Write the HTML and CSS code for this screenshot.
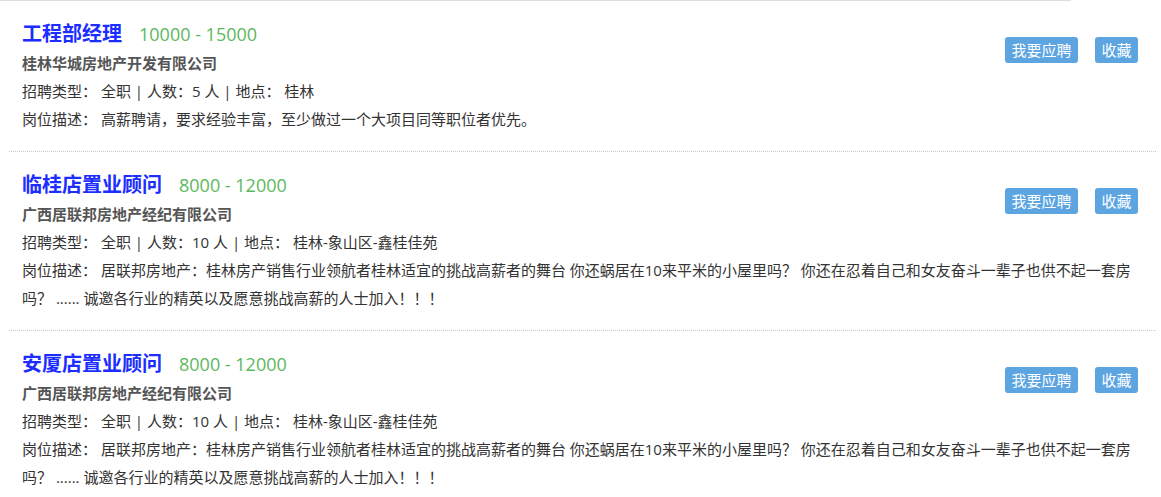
FILE: index.html
```html
<!DOCTYPE html>
<html lang="zh">
<head>
  <meta charset="UTF-8">
  <title>招聘职位列表</title>
  <link rel="stylesheet" href="styles.css">
</head>
<body>

  <div class="top-line"></div>

  <ul class="job-list">
    <li class="job">
      <div class="job-actions">
        <a class="btn" href="#">我要应聘</a>
        <a class="btn" href="#">收藏</a>
      </div>
      <h3 class="job-title"><a href="#">工程部经理</a><span class="salary">10000 - 15000</span></h3>
      <p class="company">桂林华城房地产开发有限公司</p>
      <p class="info">招聘类型： 全职 | 人数：5 人 | 地点： 桂林</p>
      <p class="desc">岗位描述： 高薪聘请，要求经验丰富，至少做过一个大项目同等职位者优先。</p>
    </li>

    <li class="job">
      <div class="job-actions">
        <a class="btn" href="#">我要应聘</a>
        <a class="btn" href="#">收藏</a>
      </div>
      <h3 class="job-title"><a href="#">临桂店置业顾问</a><span class="salary">8000 - 12000</span></h3>
      <p class="company">广西居联邦房地产经纪有限公司</p>
      <p class="info">招聘类型： 全职 | 人数：10 人 | 地点： 桂林-象山区-鑫桂佳苑</p>
      <p class="desc">岗位描述： 居联邦房地产：桂林房产销售行业领航者桂林适宜的挑战高薪者的舞台 你还蜗居在10来平米的小屋里吗？ 你还在忍着自己和女友奋斗一辈子也供不起一套房吗？ ...... 诚邀各行业的精英以及愿意挑战高薪的人士加入！！！</p>
    </li>

    <li class="job">
      <div class="job-actions">
        <a class="btn" href="#">我要应聘</a>
        <a class="btn" href="#">收藏</a>
      </div>
      <h3 class="job-title"><a href="#">安厦店置业顾问</a><span class="salary">8000 - 12000</span></h3>
      <p class="company">广西居联邦房地产经纪有限公司</p>
      <p class="info">招聘类型： 全职 | 人数：10 人 | 地点： 桂林-象山区-鑫桂佳苑</p>
      <p class="desc">岗位描述： 居联邦房地产：桂林房产销售行业领航者桂林适宜的挑战高薪者的舞台 你还蜗居在10来平米的小屋里吗？ 你还在忍着自己和女友奋斗一辈子也供不起一套房吗？ ...... 诚邀各行业的精英以及愿意挑战高薪的人士加入！！！</p>
    </li>
  </ul>

</body>
</html>
```

FILE: styles.css
```css
body {
  margin: 0;
  font-family: "Open Sans", "Noto Sans CJK SC", sans-serif;
  font-size: 15px;
  color: #333;
  background: #fff;
}

.top-line {
  width: 1071px;
  height: 1px;
  background: #ddd;
}

.job-list {
  list-style: none;
  margin: 0 5px 0 9px;
  padding: 0;
}

.job {
  padding: 18px 6px 18px 13px;
  border-bottom: 1px dotted #c8c8c8;
}

.job-actions {
  float: right;
  display: flex;
  gap: 17px;
  margin: 18px 12px 0 0;
}

.btn {
  height: 26px;
  line-height: 26px;
  padding: 0 6.5px;
  background: #5ca5e1;
  color: #fff;
  border-radius: 3px;
  text-decoration: none;
  font-size: 15px;
}

.job-title {
  margin: 0;
  font-size: 20px;
  line-height: 30px;
  font-weight: bold;
}

.job-title a {
  color: #1c2eff;
  text-decoration: none;
}

.salary {
  margin-left: 17px;
  font-size: 18px;
  font-weight: normal;
  color: #5cb85c;
}

.company {
  margin: 0;
  line-height: 28px;
  font-weight: bold;
  color: #555;
}

.info,
.desc {
  margin: 0;
  line-height: 28px;
  color: #333;
}
```
